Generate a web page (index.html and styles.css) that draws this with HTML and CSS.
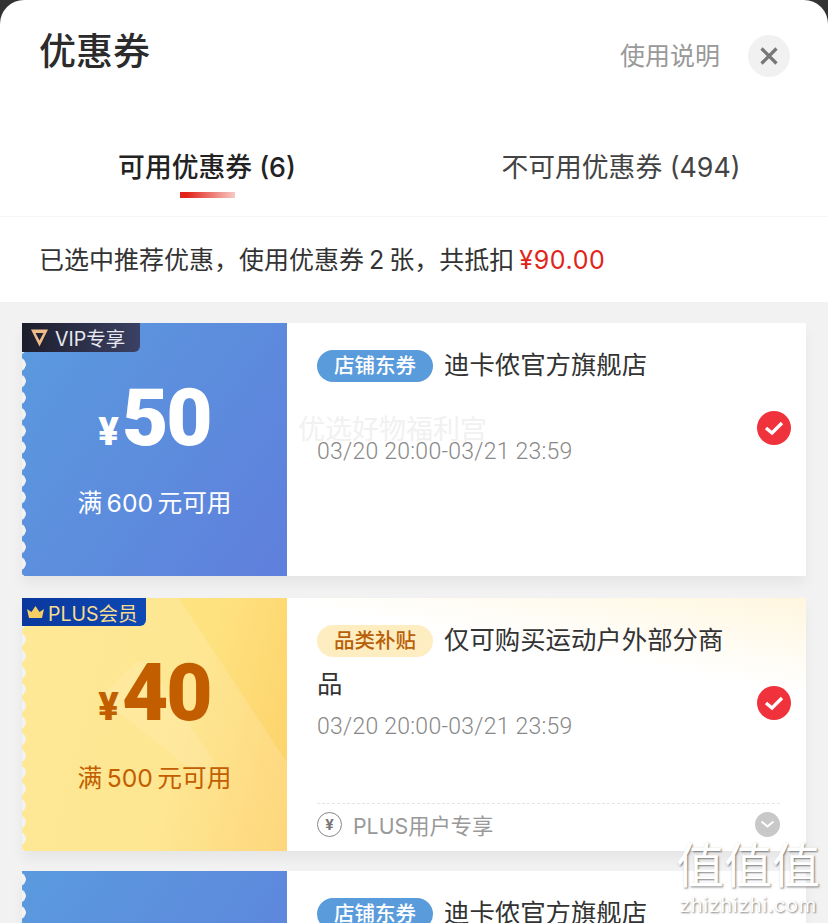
FILE: index.html
```html
<!DOCTYPE html>
<html lang="zh-CN">
  <head>
    <meta charset="UTF-8" />
    <meta name="viewport" content="width=device-width, initial-scale=1.0" />
    <title>优惠券</title>
    <link rel="stylesheet" href="styles.css">
  </head>
  <body>
    <div class="sheet">
      <header class="header">
        <h1 class="title">优惠券</h1>
        <div class="actions">
          <span class="help">使用说明</span>
          <button type="button" class="close" aria-label="关闭">
            <svg width="20" height="20" viewBox="0 0 20 20">
              <path d="M2.5 2.5L17.5 17.5M17.5 2.5L2.5 17.5" stroke="#777" stroke-width="3.2" fill="none" />
            </svg>
          </button>
        </div>
      </header>

      <nav class="tabs">
        <div class="tab tab-active">
          <span class="tab-text">可用优惠券 (6)</span>
          <span class="tab-bar"></span>
        </div>
        <div class="tab">
          <span class="tab-text">不可用优惠券 (494)</span>
        </div>
      </nav>

      <p class="notice">已选中推荐优惠，使用优惠券 2 张，共抵扣 <span class="notice-price">¥90.00</span></p>

      <main class="list">
        <section class="coupon">
          <div class="coupon-left blue">
            <span class="badge badge-vip">
              <svg width="19" height="19" viewBox="0 0 19 19">
                <path d="M1 1.5H18L9.5 18.5Z M5.5 5L9.5 12.5L13.5 5Z" fill="#f0bd8a" fill-rule="evenodd" />
              </svg>
              VIP专享
            </span>
            <div class="amount"><span class="yen">¥</span>50</div>
            <div class="limit">满 600 元可用</div>
          </div>
          <div class="coupon-right">
            <div class="coupon-title"><span class="tag tag-blue">店铺东券</span>迪卡侬官方旗舰店</div>
            <div class="date">03/20 20:00-03/21 23:59</div>
            <span class="check">
              <svg width="20" height="16" viewBox="0 0 20 16">
                <path d="M2 8L8 13L18 3" stroke="#fff" stroke-width="3.4" fill="none" />
              </svg>
            </span>
          </div>
          <span class="ghost-text">优选好物福利宫</span>
        </section>

        <section class="coupon">
          <div class="coupon-left gold">
            <span class="gold-shape"></span>
            <span class="gold-hill"></span>
            <span class="badge badge-plus">
              <svg width="19" height="15" viewBox="0 0 19 15">
                <path d="M1 4L5.5 7L9.5 1L13.5 7L18 4L16 13H3Z" fill="#f5cd62" />
              </svg>
              PLUS会员
            </span>
            <div class="amount"><span class="yen">¥</span>40</div>
            <div class="limit">满 500 元可用</div>
          </div>
          <div class="coupon-right coupon-right-gold">
            <div class="coupon-title"><span class="tag tag-gold">品类补贴</span>仅可购买运动户外部分商品</div>
            <div class="date">03/20 20:00-03/21 23:59</div>
            <span class="check">
              <svg width="20" height="16" viewBox="0 0 20 16">
                <path d="M2 8L8 13L18 3" stroke="#fff" stroke-width="3.4" fill="none" />
              </svg>
            </span>
            <div class="coupon-foot">
              <span class="foot-label"><span class="foot-icon">¥</span>PLUS用户专享</span>
              <span class="chevron">
                <svg width="15" height="9" viewBox="0 0 15 9">
                  <path d="M1.5 1.5L7.5 6.5L13.5 1.5" stroke="#fff" stroke-width="2" fill="none" />
                </svg>
              </span>
            </div>
          </div>
        </section>

        <section class="coupon coupon-cut">
          <div class="coupon-left blue"></div>
          <div class="coupon-right">
            <div class="coupon-title"><span class="tag tag-blue">店铺东券</span>迪卡侬官方旗舰店</div>
          </div>
        </section>
      </main>

      <div class="site-mark">
        <span class="site-mark-glyphs">值值值</span>
        <span class="site-mark-url">zhizhizhi.com</span>
      </div>
    </div>
  </body>
</html>
```

FILE: styles.css
```css
html,
body {
  margin: 0;
  height: 100%;
  overflow: hidden;
  background: #333;
}
body {
  font-family: "Inter", "Noto Sans CJK SC", sans-serif;
  color: #2b2b2b;
}
.sheet {
  position: relative;
  height: 923px;
  overflow: hidden;
  background: #fff;
  border-radius: 24px 24px 0 0;
}

/* header */
.header {
  height: 110px;
  box-sizing: border-box;
  padding: 26px 39px 0;
  display: flex;
  justify-content: space-between;
  align-items: flex-start;
}
.title {
  margin: 0;
  font-size: 37px;
  line-height: 52px;
  font-weight: 500;
}
.actions {
  display: flex;
  align-items: center;
  gap: 28px;
  margin-right: -1px;
  padding-top: 9px;
}
.help {
  margin-bottom: 4px;
  font-size: 25px;
  color: #999;
}
.close {
  width: 42px;
  height: 42px;
  padding: 0;
  border: 0;
  border-radius: 50%;
  background: #f1f1f1;
  display: flex;
  align-items: center;
  justify-content: center;
}

/* tabs */
.tabs {
  height: 107px;
  box-sizing: border-box;
  padding-top: 39px;
  display: flex;
  border-bottom: 1px solid #f5f5f5;
}
.tab {
  flex: 1;
  display: flex;
  flex-direction: column;
  align-items: center;
  gap: 7px;
}
.tab-text {
  font-size: 26.8px;
  line-height: 36px;
  color: #444;
  white-space: nowrap;
}
.tab-active .tab-text {
  font-weight: 500;
  color: #222;
}
.tab-bar {
  width: 55px;
  height: 6px;
  background: linear-gradient(90deg, #e2231a 0, #e2231a 12%, #f7c9c5 100%);
}

/* summary line */
.notice {
  margin: 0;
  height: 85px;
  padding: 0 39px;
  font-size: 25px;
  line-height: 87px;
  color: #333;
  white-space: nowrap;
  word-spacing: -2px;
}
.notice-price {
  color: #e2231a;
  letter-spacing: 0.6px;
}

/* coupons */
.list {
  background: #f2f2f2;
  padding: 21px 22px;
  display: flex;
  flex-direction: column;
  gap: 22px;
}
.coupon {
  position: relative;
  flex: none;
  height: 253px;
  display: flex;
  background: #fff;
  box-shadow: 0 8px 12px rgba(0, 0, 0, 0.05);
}
.coupon-cut {
  margin-top: -2px;
}
.coupon-left {
  position: relative;
  flex: none;
  width: 265px;
  overflow: hidden;
  display: flex;
  flex-direction: column;
  align-items: center;
}
.coupon-left::before {
  content: "";
  position: absolute;
  left: 0;
  top: 0;
  bottom: 0;
  width: 5px;
  z-index: 1;
  background: radial-gradient(circle at -3px 50%, #f2f2f2 6.5px, transparent 7px) 0 0 / 5px 16.6px repeat-y;
}
.blue {
  background: linear-gradient(125deg, #5a9ade 0%, #5f7fdc 100%);
  color: #fff;
}
.gold {
  background: linear-gradient(105deg, #fee685 0%, #fee280 60%, #fdd067 100%);
  color: #c25e00;
}
.gold-shape {
  position: absolute;
  inset: 0;
  background: rgba(255, 255, 255, 0.14);
  clip-path: polygon(0 0, 59% 0, 100% 65%, 100% 100%, 0 100%);
}
.gold-hill {
  position: absolute;
  left: 78px;
  top: 64px;
  width: 120px;
  height: 120px;
  background: rgba(255, 255, 255, 0.1);
  clip-path: polygon(30% 0, 40% 0, 100% 90%, 90% 100%, 0 30%);
}
.badge {
  position: absolute;
  top: 0;
  left: 0;
  z-index: 2;
  display: flex;
  align-items: center;
  box-sizing: border-box;
  border-bottom-right-radius: 6px;
  white-space: nowrap;
}
.badge-vip {
  width: 118px;
  height: 29px;
  gap: 6px;
  padding-left: 8px;
  font-size: 19.5px;
  color: #e8e8f0;
  background: linear-gradient(90deg, #1d1e2c, #3b4163);
}
.badge-plus {
  width: 124px;
  height: 28px;
  gap: 3px;
  padding-left: 4px;
  font-size: 19.5px;
  color: #f8dc8e;
  background: linear-gradient(90deg, #0a389d, #0d49b5);
}
.amount {
  position: relative;
  margin-top: 48px;
  display: flex;
  align-items: baseline;
  font-family: "Roboto", sans-serif;
  font-size: 80px;
  line-height: 94px;
  font-weight: 900;
  letter-spacing: -2px;
}
.yen {
  font-size: 38px;
  margin-right: 5px;
}
.limit {
  position: relative;
  margin-top: 6px;
  font-size: 24.7px;
  line-height: 36px;
  white-space: nowrap;
  word-spacing: -2.5px;
}
.coupon-right {
  position: relative;
  flex: 1;
  box-sizing: border-box;
  padding: 20px 26px 0 30px;
  display: flex;
  flex-direction: column;
}
.coupon-right-gold {
  background: linear-gradient(190deg, #fff6de 0%, #fff 28%);
}
.coupon-title {
  min-height: 90px;
  max-width: 415px;
  font-size: 25.4px;
  line-height: 44px;
  color: #333;
}
.tag {
  display: inline-block;
  width: 116px;
  height: 32px;
  margin-right: 11px;
  border-radius: 16px;
  font-size: 20.5px;
  line-height: 32px;
  font-weight: 500;
  text-align: center;
  vertical-align: 1px;
}
.tag-blue {
  background: #5a9bdc;
  color: #fff;
}
.tag-gold {
  background: #ffedc2;
  color: #b85f08;
}
.date {
  margin-top: 4px;
  font-family: "Roboto", sans-serif;
  font-size: 23px;
  font-weight: 300;
  line-height: 30px;
  letter-spacing: 0.25px;
  color: #888;
  white-space: nowrap;
}
.check {
  position: absolute;
  right: 15px;
  top: 88px;
  width: 34px;
  height: 34px;
  border-radius: 50%;
  background: #f0323c;
  display: flex;
  align-items: center;
  justify-content: center;
}
.coupon-foot {
  margin-top: auto;
  height: 41px;
  padding-bottom: 6px;
  border-top: 1px dashed #e4e4e4;
  display: flex;
  align-items: center;
  justify-content: space-between;
}
.foot-label {
  display: flex;
  align-items: center;
  gap: 11px;
  font-size: 21.3px;
  color: #999;
}
.foot-icon {
  width: 23px;
  height: 23px;
  border: 1px solid #888;
  border-radius: 50%;
  font-size: 15px;
  line-height: 23px;
  font-weight: 700;
  text-align: center;
  color: #777;
}
.chevron {
  width: 25px;
  height: 25px;
  border-radius: 50%;
  background: #c8c8c8;
  display: flex;
  align-items: center;
  justify-content: center;
}

/* overlays */
.ghost-text {
  position: absolute;
  left: 276px;
  top: 91px;
  font-size: 27px;
  line-height: 32px;
  color: #f1f1f1;
  white-space: nowrap;
}
.site-mark {
  position: absolute;
  right: 8px;
  bottom: 6px;
  display: flex;
  flex-direction: column;
  align-items: center;
  color: #fff;
  text-shadow: 1px 1px 2px rgba(0, 0, 0, 0.5);
}
.site-mark-glyphs {
  font-size: 48px;
  line-height: 54px;
}
.site-mark-url {
  font-size: 20px;
  line-height: 24px;
  letter-spacing: 0.6px;
}
```
